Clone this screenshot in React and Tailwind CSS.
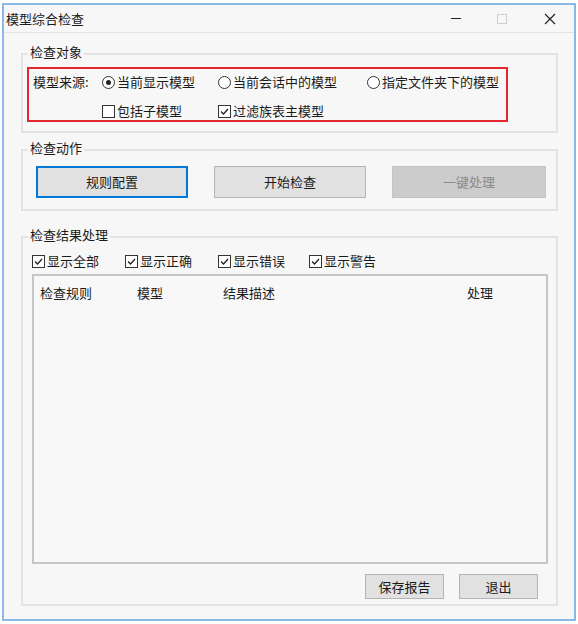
import React from "react";

const font = { fontFamily: '"Noto Sans CJK SC", "Noto Sans", sans-serif' };

function Radio({ checked, label }) {
  return (
    <div className="flex items-center gap-[2px]">
      <span className="w-[13px] h-[13px] rounded-full border border-[#333] bg-white flex items-center justify-center">
        {checked && <span className="w-[5px] h-[5px] rounded-full bg-[#222]" />}
      </span>
      <span>{label}</span>
    </div>
  );
}

function Check({ checked, label }) {
  return (
    <div className="flex items-center gap-[2px]">
      <span className="w-[13px] h-[13px] border border-[#333] bg-white flex items-center justify-center">
        {checked && (
          <svg width="11" height="11" viewBox="0 0 11 11">
            <path d="M2 5.5 L4.5 8 L9 3" fill="none" stroke="#222" strokeWidth="1.3" />
          </svg>
        )}
      </span>
      <span>{label}</span>
    </div>
  );
}

function Group({ title, className, children }) {
  return (
    <div className={`relative ml-[17px] w-[537px] border-2 border-[#e3e3e3] ${className}`}>
      <span className="absolute -top-[12px] left-[5px] px-[2px] bg-[#f7f7f7] leading-[18px]">
        {title}
      </span>
      {children}
    </div>
  );
}

export default function App() {
  return (
    <div className="w-[578px] h-[624px] bg-white pl-[2px] pt-[3px] text-[13px] leading-[18px] text-[#1b1b1b]" style={font}>
      <div className="w-[574px] h-[618px] border-2 border-[#8ab9e8] bg-[#f7f7f7] flex flex-col">
        {/* Title bar */}
        <div className="h-[28px] flex items-center pl-[2px] border-b border-[#e4e4e4]">
          <span className="flex-1">模型综合检查</span>
          <div className="flex items-center">
            <span className="w-[44px] flex justify-center">
              <span className="w-[10px] h-px bg-[#222]" />
            </span>
            <span className="w-[48px] flex justify-center">
              <span className="w-[10px] h-[10px] border border-[#cfcfcf]" />
            </span>
            <span className="w-[48px] flex justify-center">
              <svg width="12" height="12" viewBox="0 0 12 12">
                <path d="M1 1 L11 11 M11 1 L1 11" stroke="#222" strokeWidth="1.2" />
              </svg>
            </span>
          </div>
        </div>

        {/* 检查对象 */}
        <Group title="检查对象" className="mt-[20px] h-[80px]">
          <div className="ml-[4px] mt-[12px] w-[481px] h-[55px] border-2 border-[#e3262f] pl-[4px] pt-[4px] flex flex-col gap-[11px]">
            <div className="h-[18px] flex items-center">
              <span className="w-[69px]">模型来源:</span>
              <div className="w-[116px]"><Radio checked label="当前显示模型" /></div>
              <div className="w-[149px]"><Radio label="当前会话中的模型" /></div>
              <Radio label="指定文件夹下的模型" />
            </div>
            <div className="h-[18px] flex items-center pl-[69px]">
              <div className="w-[116px]"><Check label="包括子模型" /></div>
              <Check checked label="过滤族表主模型" />
            </div>
          </div>
        </Group>

        {/* 检查动作 */}
        <Group title="检查动作" className="mt-[16px] h-[62px]">
          <div className="ml-[13px] mt-[15px] flex gap-[26px]">
            <button className="w-[152px] h-[32px] bg-[#e1e1e1] border-2 border-[#0078d7]">规则配置</button>
            <button className="w-[152px] h-[32px] bg-[#e1e1e1] border border-[#b4b4b4]">开始检查</button>
            <button className="w-[154px] h-[32px] bg-[#cccccc] border border-[#c4c4c4] text-[#8a8a8a]">一键处理</button>
          </div>
        </Group>

        {/* 检查结果处理 */}
        <Group title="检查结果处理" className="mt-[25px] h-[370px] flex flex-col">
          <div className="ml-[9px] mt-[14px] h-[18px] flex items-center">
            <div className="w-[93px]"><Check checked label="显示全部" /></div>
            <div className="w-[93px]"><Check checked label="显示正确" /></div>
            <div className="w-[91px]"><Check checked label="显示错误" /></div>
            <Check checked label="显示警告" />
          </div>
          <div className="ml-[9px] mt-[4px] w-[516px] h-[290px] border-2 border-[#c6c6c6] bg-[#f8f8f8]">
            <div className="relative pt-[8px] h-[26px]">
              <span className="absolute left-[6px]">检查规则</span>
              <span className="absolute left-[103px]">模型</span>
              <span className="absolute left-[189px]">结果描述</span>
              <span className="absolute left-[433px]">处理</span>
            </div>
          </div>
          <div className="mt-[10px] pr-[18px] flex justify-end gap-[15px]">
            <button className="w-[79px] h-[25px] bg-[#e1e1e1] border border-[#b4b4b4]">保存报告</button>
            <button className="w-[79px] h-[25px] bg-[#e1e1e1] border border-[#b4b4b4]">退出</button>
          </div>
        </Group>
      </div>
    </div>
  );
}
